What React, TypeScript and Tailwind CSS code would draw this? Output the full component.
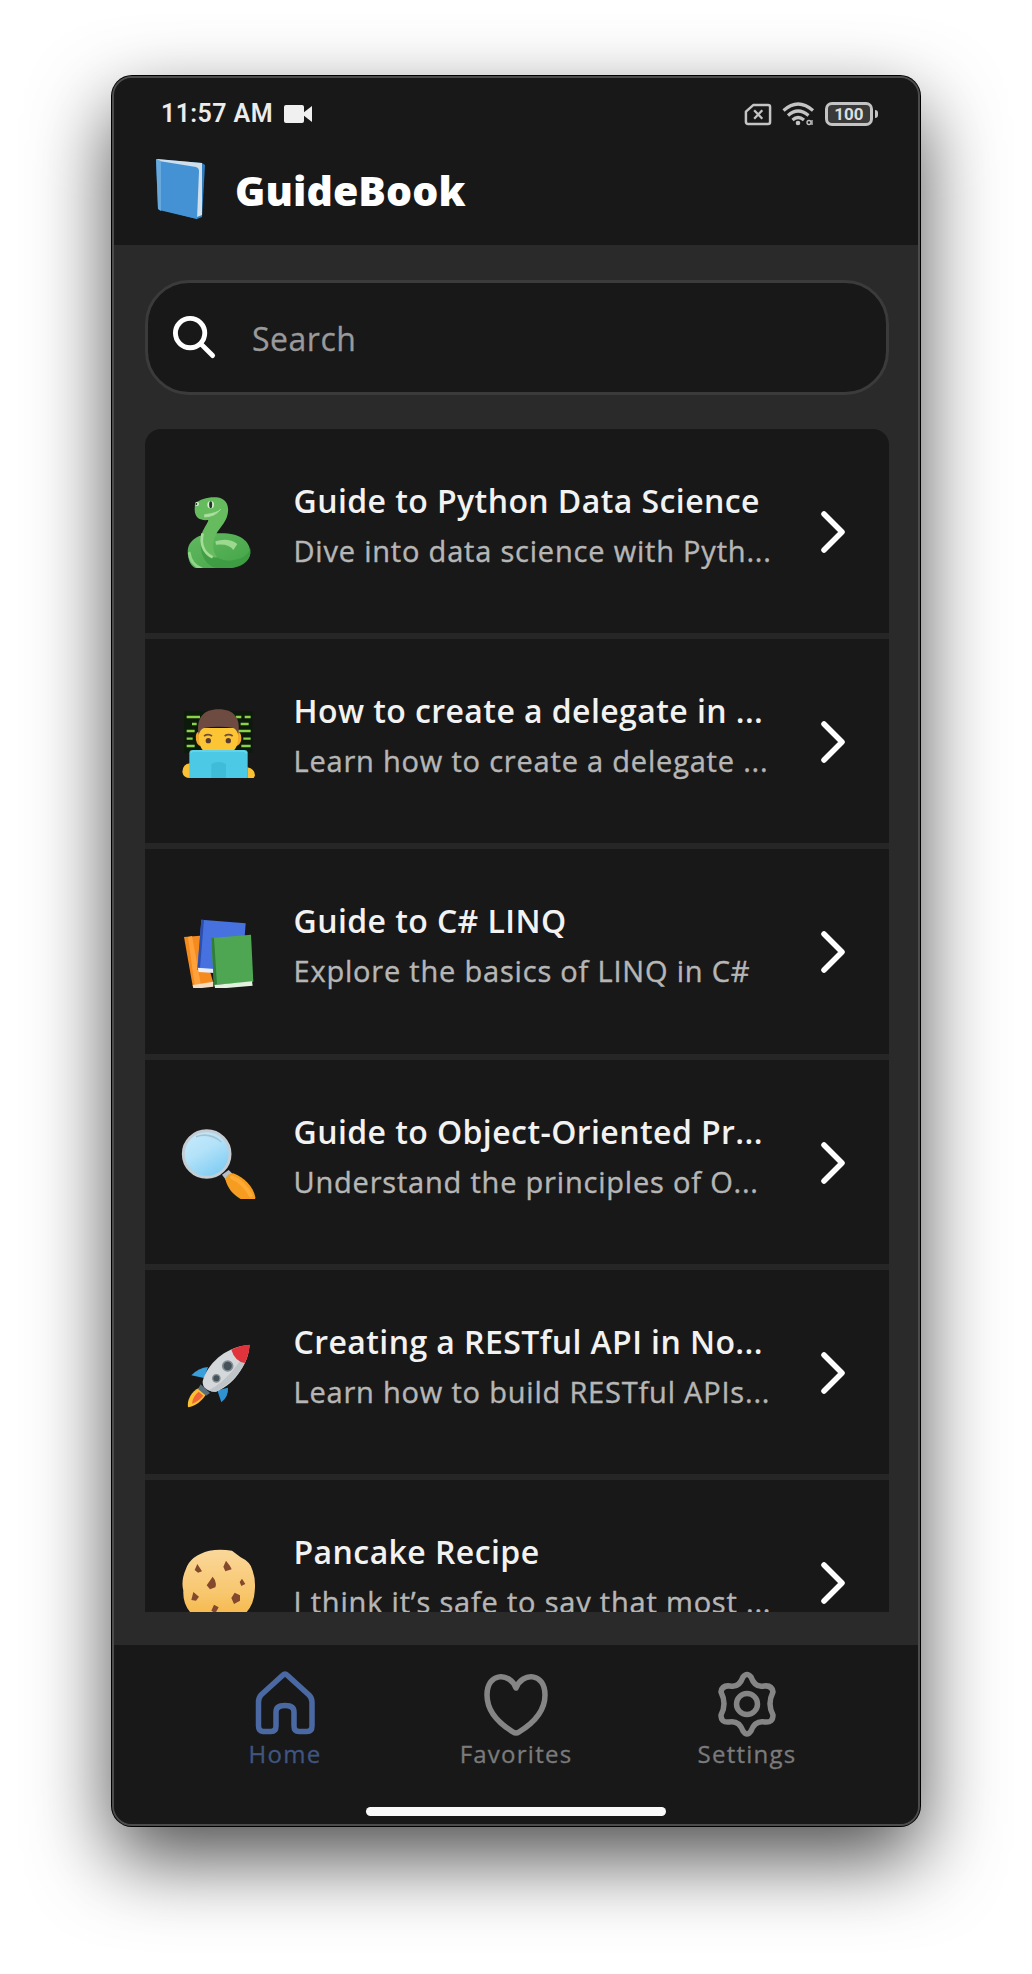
import React from 'react';

type Guide = { title: string; sub: string; icon: React.ReactNode };

const Snake = () => (
  <svg className="h-[78px] w-[78px]" viewBox="60 60 234 234">
    <defs>
      <linearGradient id="sn" x1="0" y1="0" x2="1" y2="1">
        <stop offset="0" stopColor="#62b860" />
        <stop offset="1" stopColor="#43a447" />
      </linearGradient>
    </defs>
    <path d="M84 255C78 215 110 190 170 190C235 186 272 210 271 250C266 292 205 300 150 297C118 306 88 296 84 255Z" fill="url(#sn)" />
    <path d="M150 205C145 240 160 268 205 272C245 270 266 255 271 235C275 275 245 294 190 298C150 296 120 270 122 215Z" fill="#3b9a40" opacity=".8" />
    <path d="M105 100C120 88 145 80 170 82C200 86 208 108 203 132C198 160 172 180 165 200C156 225 158 245 172 262C150 268 122 240 122 212C122 182 142 165 145 150C125 152 104 148 104 118Z" fill="#66bb5f" />
    <path d="M128 190C120 220 130 250 158 262" fill="none" stroke="#a4dc98" strokeWidth="8" />
    <path d="M166 214Q205 202 232 222L220 240Q208 220 168 224Z" fill="#9ad98e" />
    <path d="M134 141Q165 140 182 118Q172 130 134 134Z" fill="#b0e2a3" stroke="#a6dc98" strokeWidth="3" />
    <ellipse cx="152" cy="104" rx="10" ry="11" fill="#d9ecd4" />
    <ellipse cx="152" cy="104" rx="4.500" ry="10" fill="#20351f" />
    <circle cx="111" cy="102" r="6" fill="#d9ecd4" />
    <circle cx="109" cy="102" r="3" fill="#20351f" />
    <path d="M88 250Q92 282 124 296" fill="none" stroke="#8fd487" strokeWidth="9" strokeLinecap="round" />
  </svg>
);

const Coder = () => (
  <svg className="h-[78px] w-[78px]" viewBox="60 46 234 234">
    <rect x="72" y="80" width="205" height="125" fill="#0c1a0c" />
    <g stroke="#8bd14a" strokeWidth="7">
      <path d="M80 97H120M96 118H110M80 139H104M80 162H98M80 184H104M228 97H244M254 97H272M242 118H266M232 139H272M250 162H272M244 184H272" />
    </g>
    <path d="M120 140Q104 142 108 166Q112 184 124 184L230 184Q244 178 244 160Q244 142 230 140Z" fill="#f0a92c" />
    <path d="M117 130H234V160Q234 200 200 210H150Q117 200 117 160Z" fill="#fcc534" />
    <path d="M116 150C108 100 130 74 176 74C222 74 243 100 235 150Q228 132 220 130Q176 122 132 130Q122 132 116 150Z" fill="#6d4b41" />
    <path d="M132 154Q145 146 156 154M194 154Q206 146 218 154" fill="none" stroke="#6d4b41" strokeWidth="5" />
    <circle cx="145" cy="168" r="8" fill="#5a3b31" />
    <circle cx="205" cy="168" r="8" fill="#5a3b31" />
    <path d="M90 236Q68 238 67 262Q70 280 90 280ZM262 248Q284 252 285 272Q280 288 262 286Z" fill="#fbc034" />
    <rect x="88" y="196" width="175" height="90" rx="10" fill="#4cc9e4" />
    <path d="M92 204Q95 199 104 199H248Q258 200 260 206" fill="none" stroke="#6ad6ec" strokeWidth="5" />
    <path d="M154 238Q176 226 198 238V284H154Z" fill="#3fbcd8" />
    <path d="M68 280H282V288H68Z" fill="#27b5d6" />
  </svg>
);

const Books = () => (
  <svg className="h-[78px] w-[78px]" viewBox="60 61 234 234">
    <path d="M72 142L120 138L160 280L98 288Z" fill="#f58b1f" />
    <path d="M84 142L96 139L122 282L104 286Z" fill="#ffa23c" />
    <path d="M98 286L160 276V291L100 298Z" fill="#f6dcc2" />
    <path d="M124 90L257 101L246 250L112 240Z" fill="#4671df" />
    <path d="M124 90L132 91L120 236L112 240Z" fill="#2c4fab" />
    <path d="M113 234L164 238V250L116 247Z" fill="#e8eefc" />
    <path d="M154 145L273 135L280 276L162 286Z" fill="#4ea653" />
    <path d="M154 145L162 144L171 284L162 286Z" fill="#2f7f3a" />
    <path d="M163 286L276 275L278 288L166 298Z" fill="#e3f2df" />
  </svg>
);

const Lens = () => (
  <svg className="h-[78px] w-[78px]" viewBox="60 47 234 234">
    <defs>
      <linearGradient id="ln" x1="0" y1="0" x2=".6" y2="1">
        <stop offset="0" stopColor="#c9ebfb" />
        <stop offset=".5" stopColor="#b3e2f9" />
        <stop offset="1" stopColor="#82cef4" />
      </linearGradient>
    </defs>
    <path d="M186 208L206 194L218 206L198 224Z" fill="#b6bfc3" />
    <path d="M196 222Q202 204 220 204C252 216 280 244 286 276Q284 292 268 291C232 282 205 258 196 222Z" fill="#f69c20" />
    <path d="M216 216Q250 230 272 270" fill="none" stroke="#fdab34" strokeWidth="12" strokeLinecap="round" />
    <circle cx="140" cy="146" r="70" fill="url(#ln)" stroke="#c3cdd3" strokeWidth="9" />
    <path d="M108 94Q150 80 184 110" fill="none" stroke="#a4c3d2" strokeWidth="5" />
  </svg>
);

const Rocket = () => (
  <svg className="h-[78px] w-[78px]" viewBox="60 32 234 234">
    <path d="M118 202L138 222C126 242 106 258 84 261C80 240 94 212 118 202Z" fill="#fbc02d" />
    <path d="M116 214L130 226Q114 244 96 250Q98 228 116 214Z" fill="#f0643a" />
    <path d="M144 140Q116 142 94 165L132 173Z" fill="#3a9fdb" />
    <path d="M204 202Q206 228 184 246L172 210Z" fill="#2f93d2" />
    <path d="M122 192L150 218L138 226L114 206Z" fill="#5b6f7b" />
    <path d="M268 74C268 120 230 190 168 214Q146 214 134 202Q124 190 130 176C150 120 205 78 268 74Z" fill="#d5d8db" />
    <path d="M268 74C266 120 236 178 168 214Q156 216 146 210C200 182 240 130 268 74Z" fill="#bfc4c8" />
    <path d="M214 88Q240 74 269 73Q268 102 254 128Q224 122 214 88Z" fill="#e0333c" />
    <circle cx="203" cy="137" r="15" fill="#46525a" stroke="#828d94" strokeWidth="5" />
    <circle cx="169" cy="174" r="11" fill="#46525a" stroke="#828d94" strokeWidth="4" />
  </svg>
);

const Cookie = () => (
  <svg className="h-[78px] w-[78px]" viewBox="150 63 234 234">
    <defs>
      <linearGradient id="ck" x1="0" y1="0" x2="0" y2="1">
        <stop offset="0" stopColor="#fad79a" />
        <stop offset=".6" stopColor="#f8c76e" />
        <stop offset="1" stopColor="#f5b443" />
      </linearGradient>
    </defs>
    <path d="M238 92Q270 86 306 92L332 112Q362 126 368 152Q378 180 374 215Q372 250 350 276Q310 304 266 304Q214 304 180 276Q158 250 160 212Q152 182 168 146Q182 106 238 92Z" fill="url(#ck)" />
    <g fill="#84492d">
      <path d="M202 132L216 154L204 158L194 150ZM288 122L300 138L305 148L286 154L280 140ZM248 170Q262 185 256 202L240 208L230 196ZM336 176L346 192L334 198L329 186ZM190 216L207 230L198 242L184 240ZM314 218L330 226V242L312 252L304 234ZM252 254L266 262L256 280L244 272Z" />
    </g>
  </svg>
);

const guides: Guide[] = [
  { title: 'Guide to Python Data Science', sub: 'Dive into data science with Pyth...', icon: <Snake /> },
  { title: 'How to create a delegate in ...', sub: 'Learn how to create a delegate ...', icon: <Coder /> },
  { title: 'Guide to C# LINQ', sub: 'Explore the basics of LINQ in C#', icon: <Books /> },
  { title: 'Guide to Object-Oriented Pr...', sub: 'Understand the principles of O...', icon: <Lens /> },
  { title: 'Creating a RESTful API in No...', sub: 'Learn how to build RESTful APIs...', icon: <Rocket /> },
  { title: 'Pancake Recipe', sub: 'I think it’s safe to say that most ...', icon: <Cookie /> },
];

const StatusBar = () => (
  <div className="flex h-[70px] items-center pt-[2px] pr-[40px] pl-[47px] text-[#ececec]">
    <span className="w-[123px] whitespace-nowrap font-[Roboto] text-[25px] font-semibold leading-[30px] tracking-[0.4px]">11:57 AM</span>
    <svg className="h-[18px] w-[28px]" viewBox="0 0 28 18" fill="#f0f0f0">
      <rect x="0" y="0" width="20" height="18" rx="2" />
      <path d="M19 8L28 1V17L19 10Z" />
    </svg>
    <div className="ml-auto flex items-center text-[#c4c4c4]">
      <svg className="h-[23px] w-[28px]" viewBox="0 0 28 24" fill="none" stroke="currentColor" strokeWidth="2.600">
        <path d="M9 2.200H24.500Q26.600 2.200 26.600 4.300V19.700Q26.600 21.800 24.500 21.800H3.600Q1.400 21.800 1.400 19.700V9Z" strokeLinejoin="round" />
        <path d="M10 7.500L18.500 16.500M18.500 7.500L10 16.500" strokeWidth="2.400" />
      </svg>
      <svg className="ml-[10px] h-[24px] w-[34px]" viewBox="0 0 34 24" fill="none" stroke="currentColor" strokeWidth="3.200">
        <path d="M1.500 8.500Q16 -4.500 31 8.500M6 13.500Q16 4.500 26.500 13.500M10.500 18Q16 13 22 18" />
        <circle cx="16" cy="21" r="2.300" fill="currentColor" stroke="none" />
        <circle cx="27" cy="20.500" r="2" strokeWidth="1.300" />
        <path d="M30 18V23" strokeWidth="1.300" />
      </svg>
      <div className="ml-[9px] flex h-[24px] w-[48px] items-center justify-center rounded-[7px] border-[3px] border-[#c4c4c4] bg-[#3a3a3a] font-[Roboto] text-[17px] font-bold leading-none text-[#dedede]">100</div>
      <div className="ml-[2px] h-[8px] w-[3px] rounded-r bg-[#c4c4c4]" />
    </div>
  </div>
);

const tabs = [
  {
    label: 'Home',
    color: 'text-[#4a69a3]',
    text: 'text-[#3f5680]',
    icon: <path d="M32 5Q34 3 36 5L58 25Q61 28 61 32V56Q61 61.500 56 61.500H48Q43 61.500 43 56V42Q43 35.500 34 35.500Q25 35.500 25 42V56Q25 61.500 20 61.500H12Q7.500 61.500 7.500 56V32Q7.500 28 10 25Z" />,
  },
  {
    label: 'Favorites',
    color: 'text-[#858585]',
    text: 'text-[#7b7b7b]',
    icon: <path d="M34 18C28 2 5 2 5 25C5 43 18 54 31 62Q34 64 37 62C50 54 63 43 63 25C63 2 40 2 34 18Z" />,
  },
  {
    label: 'Settings',
    color: 'text-[#858585]',
    text: 'text-[#7b7b7b]',
    icon: (
      <>
        <path d="M30 7Q34 2 38 7Q42 18 51 16Q59 15 60 22Q54 34 60 45Q60 53 52 52Q42 50 38 61Q34 67 30 61Q26 50 16 52Q8 53 8 45Q14 34 8 22Q9 15 17 16Q26 18 30 7Z" />
        <circle cx="34" cy="34" r="10.500" />
      </>
    ),
  },
];

export default function App() {
  return (
    <div className="flex h-[1974px] w-[1032px] items-start overflow-hidden bg-white pt-[76px] pl-[112px] font-['Open_Sans',sans-serif]">
      <div className="flex h-[1750px] w-[808px] flex-col overflow-hidden rounded-[20px] border-2 border-[#4c4c4c] bg-[#2a2a2a] shadow-[0_0_0_1px_#000,0_32px_80px_rgba(0,0,0,0.7)]">
        <header className="h-[167px] bg-[#181818]">
          <StatusBar />
          <div className="flex h-[82px] items-center pl-[40px]">
            <svg className="h-[64px] w-[54px]" viewBox="0 0 54 64">
              <path d="M2 2L48 6L51 8L48 60L43 62L4 52Z" fill="#2f7fc0" />
              <path d="M3 2L48 6V58L43 60V13L5 6Z" fill="#cfdfec" />
              <path d="M5 4L42 10Q45 11 45 14L43 62L5 53Z" fill="#4492d3" />
              <path d="M2 2L7 4V54L4 52Z" fill="#67a9dc" />
            </svg>
            <h1 className="mt-[2px] ml-[27px] whitespace-nowrap text-[41px] font-extrabold leading-[56px] tracking-[0.1px] text-white">GuideBook</h1>
          </div>
        </header>
        <main className="flex h-[1400px] flex-col px-[31px] pt-[35px]">
          <div className="flex h-[115px] w-[744px] items-center rounded-[44px] border-[3px] border-[#3b3b3b] bg-[#181818] pl-[24px]">
            <svg className="h-[45px] w-[45px]" viewBox="0 0 46 46" fill="none" stroke="white" strokeWidth="5" strokeLinecap="round">
              <circle cx="18.500" cy="18.500" r="15" />
              <path d="M29.500 29.500L41.500 41.500" />
            </svg>
            <span className="ml-[35px] pt-[2px] text-[32px] leading-[44px] tracking-[0.5px] text-[#9a9a9a] [-webkit-text-stroke:0.3px_currentColor]">Search</span>
          </div>
          <ul className="mt-[34px] h-[1183px] w-[744px] overflow-hidden rounded-t-[16px] bg-[#181818]">
            {guides.map((g) => (
              <li key={g.title} className="flex h-[210.2px] items-start border-b-[6px] border-[#262626] pl-[35px]">
                <div className="mt-[61px] shrink-0">{g.icon}</div>
                <div className="mt-[48px] ml-[35.5px] w-[500px] whitespace-nowrap">
                  <div className="text-[32px] font-semibold leading-[48px] tracking-[0.42px] text-[#f2f2f2]">{g.title}</div>
                  <div className="mt-[4px] text-[29px] leading-[44px] tracking-[0.8px] text-[#b6b6b6] [-webkit-text-stroke:0.4px_currentColor]">{g.sub}</div>
                </div>
                <svg className="mt-[80px] ml-[25.5px] h-[46px] w-[30px] shrink-0" viewBox="0 0 30 46" fill="none" stroke="white" strokeWidth="5.500" strokeLinecap="round" strokeLinejoin="round">
                  <path d="M5 5L23 23L5 41" />
                </svg>
              </li>
            ))}
          </ul>
        </main>
        <nav className="flex flex-1 flex-col items-center bg-[#181818]">
          <div className="flex pt-[25px]">
            {tabs.map((t) => (
              <div key={t.label} className="flex w-[231px] flex-col items-center">
                <svg className={`h-[68px] w-[68px] ${t.color}`} viewBox="0 0 68 68" fill="none" stroke="currentColor" strokeWidth="5.500" strokeLinejoin="round">
                  {t.icon}
                </svg>
                <span className={`-mt-[1px] text-[24px] leading-[34px] tracking-[1.25px] [-webkit-text-stroke:0.3px_currentColor] ${t.text}`}>{t.label}</span>
              </div>
            ))}
          </div>
          <div className="mt-[36px] h-[9px] w-[300px] rounded-full bg-[#fafafa]" />
        </nav>
      </div>
    </div>
  );
}
